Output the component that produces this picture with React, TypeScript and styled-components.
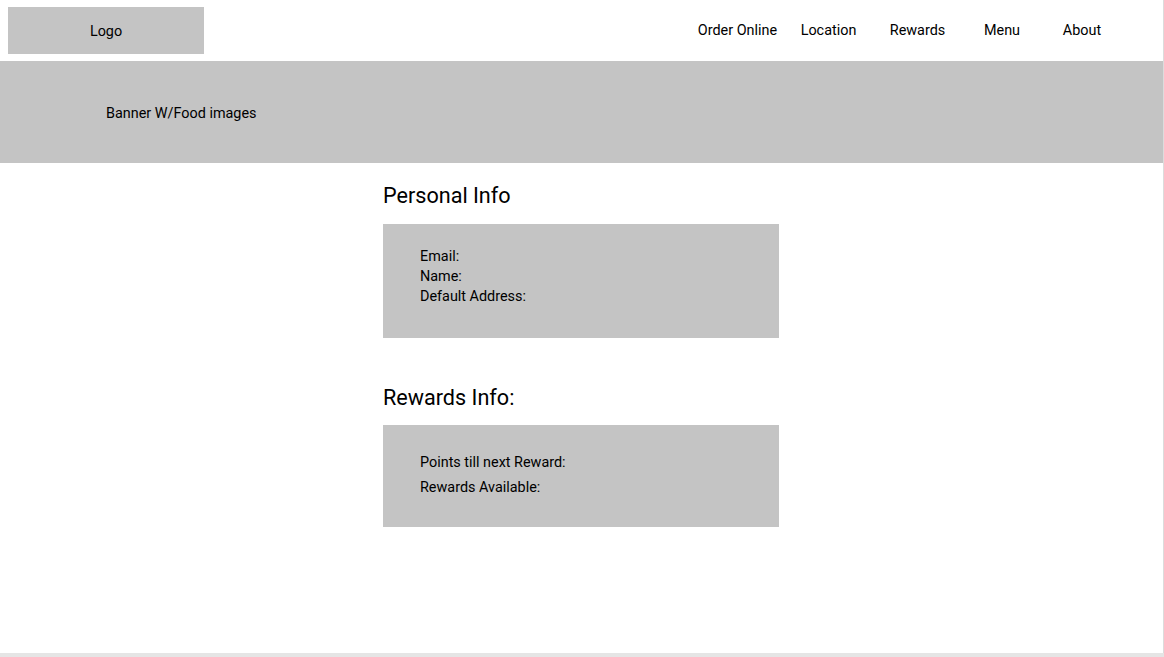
import * as React from 'react';
import styled, { createGlobalStyle } from 'styled-components';

const GlobalStyle = createGlobalStyle`
  html, body {
    margin: 0;
    padding: 0;
    background: #e5e5e5;
  }
  body {
    font-family: Roboto, "Liberation Sans", Arial, sans-serif;
    color: #000;
  }
`;

const Frame = styled.div`
  width: 1163px;
  height: 653px;
  background: #ffffff;
  border-right: 1px solid #dcdcdc;
  box-sizing: content-box;
  display: flex;
  flex-direction: column;
`;

const Header = styled.header`
  height: 61px;
  display: flex;
  align-items: flex-start;
  justify-content: space-between;
`;

const LogoBox = styled.div`
  margin: 7px 0 0 8px;
  width: 196px;
  height: 47px;
  padding-top: 1px;
  box-sizing: border-box;
  background: #c4c4c4;
  display: flex;
  align-items: center;
  justify-content: center;
  font-size: 14.4px;
`;

const Nav = styled.nav`
  display: flex;
  height: 61px;
  align-items: center;
  margin-right: 42px;
`;

const NavItem = styled.a<{ $w: number }>`
  width: ${(p) => p.$w}px;
  text-align: center;
  font-size: 14.4px;
  color: #000;
  text-decoration: none;
  cursor: pointer;
`;

const Banner = styled.div`
  height: 102px;
  background: #c4c4c4;
  display: flex;
  align-items: center;
  padding-left: 106px;
  padding-top: 2px;
  box-sizing: border-box;
  font-size: 14.4px;
`;

const Main = styled.main`
  width: 396px;
  margin: 0 0 0 383px;
  padding-top: 20px;
`;

const SectionTitle = styled.h2<{ $top?: number }>`
  margin: ${(p) => p.$top ?? 0}px 0 0;
  font-size: 21.6px;
  font-weight: 400;
  line-height: 25px;
`;

const InfoBox = styled.div<{ $h: number; $pt: number; $gap: number; $mt: number }>`
  margin-top: ${(p) => p.$mt}px;
  height: ${(p) => p.$h}px;
  background: #c4c4c4;
  box-sizing: border-box;
  padding: ${(p) => p.$pt}px 0 0 37px;
  display: flex;
  flex-direction: column;
  gap: ${(p) => p.$gap}px;
  font-size: 14.4px;
  line-height: 20px;
`;

const navItems: [string, number][] = [
  ['Order Online', 91],
  ['Location', 91],
  ['Rewards', 87],
  ['Menu', 82],
  ['About', 78],
];

export default function App() {
  return (
    <>
      <GlobalStyle />
      <Frame>
        <Header>
          <LogoBox>Logo</LogoBox>
          <Nav>
            {navItems.map(([label, w]) => (
              <NavItem key={label} $w={w}>
                {label}
              </NavItem>
            ))}
          </Nav>
        </Header>
        <Banner>Banner W/Food images</Banner>
        <Main>
          <SectionTitle>Personal Info</SectionTitle>
          <InfoBox $mt={16} $h={114} $pt={23} $gap={0}>
            <div>Email:</div>
            <div>Name:</div>
            <div>Default Address:</div>
          </InfoBox>
          <SectionTitle $top={47}>Rewards Info:</SectionTitle>
          <InfoBox $mt={15} $h={102} $pt={28} $gap={5}>
            <div>Points till next Reward:</div>
            <div>Rewards Available:</div>
          </InfoBox>
        </Main>
      </Frame>
    </>
  );
}
